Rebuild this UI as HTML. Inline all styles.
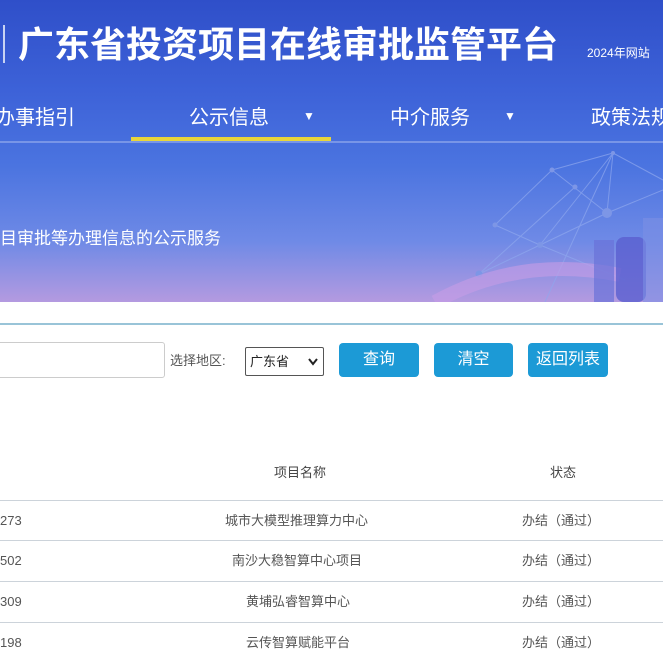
<!DOCTYPE html>
<html><head><meta charset="utf-8"><style>
*{margin:0;padding:0;box-sizing:border-box}
body{width:663px;height:663px;overflow:hidden;background:#fff;font-family:"Liberation Sans","Noto Sans CJK SC",sans-serif;position:relative}
.ban{position:absolute;left:0;top:0;width:663px;height:302px;background:linear-gradient(180deg,#2f4fc9 0%,#3d62d8 30%,#4b74e0 55%,#6f8ae6 80%,#b49ae0 100%);overflow:hidden}
.a{position:absolute;white-space:nowrap}
.row{position:absolute;left:0;width:663px;border-top:1px solid #ccd3da}
.btn{position:absolute;top:343px;height:34px;background:#1c9ad6;color:#fff;border-radius:4px;font-size:16px;text-align:center;line-height:34px}
.t{font-size:13px;color:#555;line-height:16px}
</style></head><body>
<div class="ban">
<svg width="663" height="302" style="position:absolute;left:0;top:0">
<g stroke="#8fa8ee" stroke-width="1" fill="none" opacity=".7">
<line x1="613" y1="153" x2="552" y2="170"/><line x1="613" y1="153" x2="540" y2="245"/><line x1="613" y1="153" x2="607" y2="213"/><line x1="613" y1="153" x2="663" y2="180"/>
<line x1="552" y1="170" x2="495" y2="225"/><line x1="552" y1="170" x2="607" y2="213"/><line x1="495" y1="225" x2="540" y2="245"/>
<line x1="540" y1="245" x2="479" y2="274"/><line x1="540" y1="245" x2="607" y2="213"/><line x1="607" y1="213" x2="663" y2="190"/>
<line x1="613" y1="153" x2="545" y2="302"/><line x1="540" y1="245" x2="625" y2="280"/><line x1="575" y1="187" x2="479" y2="274"/>
</g>
<g fill="#7d96e6"><circle cx="613" cy="153" r="2"/><circle cx="552" cy="170" r="2.5"/><circle cx="575" cy="187" r="2.5"/><circle cx="607" cy="213" r="5"/><circle cx="495" cy="225" r="2.5"/><circle cx="540" cy="245" r="3"/><circle cx="479" cy="274" r="3.5"/></g>
<path d="M435 302 Q520 255 620 275" stroke="#c79de6" stroke-width="14" fill="none" opacity=".6"/>
<rect x="594" y="240" width="20" height="62" fill="#6a72d8" opacity=".7"/>
<rect x="616" y="237" width="30" height="65" rx="8" fill="#5a5fcf" opacity=".8"/>
<rect x="643" y="218" width="20" height="84" fill="#7b90e4" opacity=".6"/>
<line x1="0" y1="142" x2="663" y2="142" stroke="#a9bcf1" stroke-width="1"/>
</svg>
<div class="a" style="left:3px;top:25px;width:2px;height:38px;background:#c8d3f3"></div>
<div class="a" style="left:18px;top:21px;font-size:36px;line-height:48px;font-weight:bold;color:#fff">广东省投资项目在线审批监管平台</div>
<div class="a" style="left:587px;top:44px;font-size:12px;color:#fff">2024年网站</div>
<div class="a" style="left:-5px;top:101px;font-size:20px;color:#fff">办事指引</div>
<div class="a" style="left:189px;top:101px;font-size:20px;color:#fff">公示信息</div>
<div class="a" style="left:303px;top:109px;font-size:12px;color:#fff">▼</div>
<div class="a" style="left:390px;top:101px;font-size:20px;color:#fff">中介服务</div>
<div class="a" style="left:504px;top:109px;font-size:12px;color:#fff">▼</div>
<div class="a" style="left:591px;top:101px;font-size:20px;color:#fff">政策法规</div>
<div class="a" style="left:131px;top:137px;width:200px;height:4px;background:#e8d53a"></div>
<div class="a" style="left:0;top:224px;font-size:17px;color:#fff">目审批等办理信息的公示服务</div>
</div>
<div class="a" style="left:0;top:323px;width:663px;height:2px;background:#99c4d8"></div>
<div class="a" style="left:-10px;top:342px;width:175px;height:36px;border:1px solid #ccc;border-radius:3px"></div>
<div class="a t" style="left:170px;top:353px;color:#555">选择地区:</div>
<div class="a" style="left:245px;top:347px;width:79px;height:29px;border:1px solid #555;border-radius:2px;font-size:13px;line-height:27px;padding-left:4px;color:#222">广东省<svg width="10" height="8" style="position:absolute;left:62px;top:10px"><path d="M1 1L5 6L9 1" stroke="#222" stroke-width="2" fill="none"/></svg></div>
<div class="btn" style="left:339px;width:80px">查询</div>
<div class="btn" style="left:434px;width:79px">清空</div>
<div class="btn" style="left:528px;width:80px">返回列表</div>
<div class="a t" style="left:274px;top:465px;color:#444">项目名称</div>
<div class="a t" style="left:550px;top:465px;color:#444">状态</div>
<div class="row" style="top:500px"></div><div class="row" style="top:540px"></div><div class="row" style="top:581px"></div><div class="row" style="top:622px"></div>
<div class="a t" style="left:0;top:513px">273</div><div class="a t" style="left:225px;top:513px">城市大模型推理算力中心</div><div class="a t" style="left:522px;top:513px">办结（通过）</div>
<div class="a t" style="left:0;top:553px">502</div><div class="a t" style="left:232px;top:553px">南沙大稳智算中心项目</div><div class="a t" style="left:522px;top:553px">办结（通过）</div>
<div class="a t" style="left:0;top:594px">309</div><div class="a t" style="left:246px;top:594px">黄埔弘睿智算中心</div><div class="a t" style="left:522px;top:594px">办结（通过）</div>
<div class="a t" style="left:0;top:635px">198</div><div class="a t" style="left:246px;top:635px">云传智算赋能平台</div><div class="a t" style="left:522px;top:635px">办结（通过）</div>
</body></html>
